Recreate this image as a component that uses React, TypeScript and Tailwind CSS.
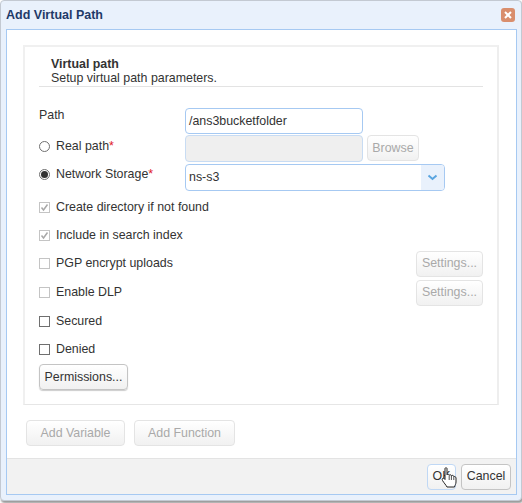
const btn = "h-[26px] rounded-[4px] border text-[12.4px] leading-none flex items-center justify-center bg-gradient-to-b from-white to-[#f1f1f1]";
const off = `${btn} border-[#e4e4e4] text-[#a9a9a9]`;

function Check({ checked, dim }: { checked?: boolean; dim?: boolean }) {
  return (
    <span className={`w-[11px] h-[11px] border flex items-center justify-center bg-white ${dim ? "border-[#c4c4c4]" : "border-[#6f6f6f]"}`}>
      {checked && (
        <svg width="9" height="9" viewBox="0 0 9 9" fill="none">
          <path d="M1.5 4.5 L3.5 7 L7.5 1.5" stroke="#a8a8a8" strokeWidth="1.5" />
        </svg>
      )}
    </span>
  );
}

function Radio({ on }: { on?: boolean }) {
  return (
    <span className="w-[11px] h-[11px] rounded-full border border-[#707070] bg-white flex items-center justify-center">
      {on && <span className="w-[7px] h-[7px] rounded-full bg-[#333]" />}
    </span>
  );
}

function CheckRow({ label, checked, dim, h, settings }: { label: string; checked?: boolean; dim?: boolean; h: string; settings?: boolean }) {
  return (
    <div className={`flex items-center ${h}`}>
      <Check checked={checked} dim={dim} />
      <span className="ml-[6px] flex-1">{label}</span>
      {settings && <div className={`${off} w-[67px]`}>Settings...</div>}
    </div>
  );
}

function Hand() {
  return (
    <svg className="absolute left-[441px] top-[467px]" width="17" height="22" viewBox="0 0 17 22">
      <path
        d="M4 1.5 C4 0.5 6 0.5 6 1.5 V8 C6.5 7 8 7 8.2 8.3 C8.8 7.4 10.2 7.6 10.4 8.8 C11 8 12.6 8.3 12.8 9.5 C13.4 9.3 15 9.6 15 11 V15 C15 17 14 18 13.5 20 H6 C5 18 3 16 1.5 13.5 C0.5 12 2 10.5 3.2 11.5 L4 12.5 Z"
        fill="#fff"
        stroke="#222"
        strokeWidth="1"
      />
      <path d="M8.2 8.5 V13 M10.4 9 V13 M12.8 9.7 V13" stroke="#222" strokeWidth="0.8" fill="none" />
    </svg>
  );
}

export default function App() {
  return (
    <div className="relative w-[522px] h-[503px] overflow-hidden bg-white font-['Liberation_Sans',Arial,sans-serif] text-[12.4px] text-[#333]">
      <div className="h-[501px] w-[522px] rounded-[4px] border border-[#c3c9d2] bg-[#e9f1fc] pl-[5px] pr-[4px] pb-[5px] flex flex-col shadow-[1px_2px_2px_#999]">
        {/* title bar */}
        <div className="h-[28px] shrink-0 flex items-center justify-between">
          <span className="text-[12.5px] font-bold text-[#1f3a68]">Add Virtual Path</span>
          <span className="w-[14px] h-[14px] mr-[2px] rounded-[3px] bg-[#d98e6d] flex items-center justify-center">
            <svg width="8" height="8" viewBox="0 0 8 8">
              <path d="M1 1 L7 7 M7 1 L1 7" stroke="#fff" strokeWidth="2" />
            </svg>
          </span>
        </div>

        <div className="flex-1 flex flex-col border border-[#a6c9f2] bg-white">
          <div className="flex-1 pt-[15px] pl-[16px] pr-[17px]">
            {/* panel */}
            <div className="h-[360px] border-2 border-[#f0f0f0] border-b-[#e6e6e6] border-b pl-[14px] pr-[14px] pt-[5px] border-r-[#eeeeee]">
              <div className="h-[35px] border-b border-[#e3e3e3] pl-[12px] pt-[5px] leading-[14px]">
                <div className="font-bold text-[#333]">Virtual path</div>
                <div>Setup virtual path parameters.</div>
              </div>

              <div className="grid grid-cols-[146px_1fr] mt-[21px] items-start">
                <div className="h-[26px] leading-[14px]">Path</div>
                <div className="h-[26px] w-[178px] rounded-[4px] border border-[#a6c9f2] px-[3px] flex items-center">/ans3bucketfolder</div>

                <div className="h-[28px] flex items-center gap-[6px] mt-[1px] pb-[6px]">
                  <Radio />
                  <span>Real path<span className="text-[#e0202a]">*</span></span>
                </div>
                <div className="flex gap-[4px] mt-[1px]">
                  <div className="h-[27px] w-[178px] rounded-[4px] border border-[#c8dcf3] bg-[#efefef]" />
                  <div className={`${off} w-[52px]`}>Browse</div>
                </div>

                <div className="h-[27px] flex items-center gap-[6px] mt-px pb-[7px]">
                  <Radio on />
                  <span>Network Storage<span className="text-[#e0202a]">*</span></span>
                </div>
                <div className="h-[27px] w-[260px] mt-px rounded-[4px] border border-[#a6c9f2] flex items-center overflow-hidden">
                  <span className="flex-1 px-[3px]">ns-s3</span>
                  <span className="w-[23px] h-full bg-[#e9f1fc] flex items-center justify-center">
                    <svg width="11" height="7" viewBox="0 0 11 7" fill="none">
                      <path d="M1.5 1.5 L5.5 5 L9.5 1.5" stroke="#5aa5e0" strokeWidth="2" />
                    </svg>
                  </span>
                </div>
              </div>

              <div className="mt-[3px]">
                <CheckRow label="Create directory if not found" checked dim h="h-[27px]" />
                <CheckRow label="Include in search index" checked dim h="h-[28px]" />
                <CheckRow label="PGP encrypt uploads" dim settings h="h-[29px]" />
                <CheckRow label="Enable DLP" dim settings h="h-[29px]" />
                <CheckRow label="Secured" h="h-[29px]" />
                <CheckRow label="Denied" h="h-[26px]" />
              </div>
              <div className={`${btn} w-[89px] mt-[2px] border-[#c4c4c4] shadow-[0_1px_1px_#ccc] text-[#333]`}>Permissions...</div>
            </div>

            <div className="flex gap-[9px] mt-[15px] pl-[3px]">
              <div className={`${off} w-[99px]`}>Add Variable</div>
              <div className={`${off} w-[101px]`}>Add Function</div>
            </div>
          </div>

          {/* footer */}
          <div className="h-[36px] shrink-0 border-t border-[#e3e3e3] bg-[#f2f2f2] flex items-center justify-end gap-[5px] pr-[5px]">
            <div className={`${btn} w-[29px] border-[#c0d8f5] text-[#333]`}>OK</div>
            <div className={`${btn} w-[50px] border-[#c4c4c4] text-[#333]`}>Cancel</div>
          </div>
        </div>
      </div>
      <Hand />
    </div>
  );
}
